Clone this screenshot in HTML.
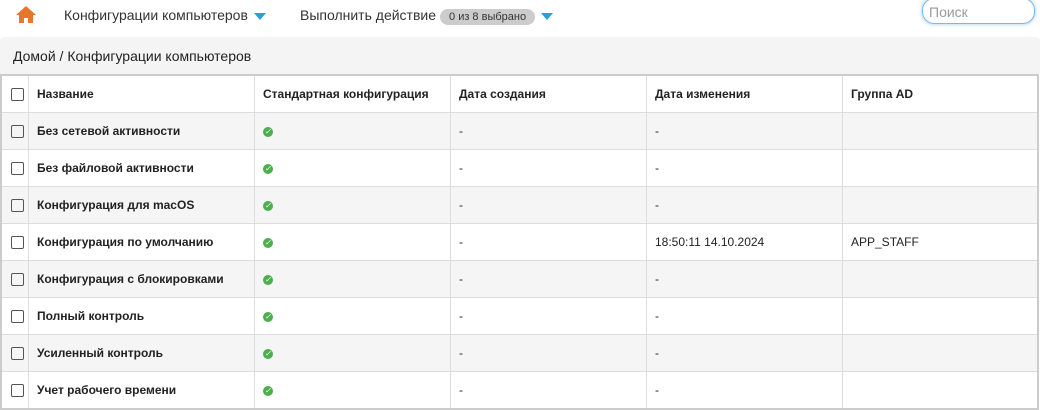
<!DOCTYPE html>
<html><head><meta charset="utf-8"><style>
body{margin:0;width:1040px;height:408px;overflow:hidden;background:#fff;font-family:"Liberation Sans",sans-serif;color:#222}
.top{height:37px;position:relative}
.top span{position:absolute;top:7px;font-size:14px;color:#333}
.tri{display:inline-block;width:0;height:0;border-left:6px solid transparent;border-right:6px solid transparent;border-top:7px solid #2a9fd8;vertical-align:middle;margin-left:6px}
.badge{background:#ccc;border-radius:9px;font-size:11px;padding:2px 9px;margin-left:4px;color:#333}
.search{position:absolute;left:922px;top:-2px;width:113px;height:26px;border:1px solid #7ab8e8;border-radius:12px;box-shadow:0 0 4px #9cc8f0;font-size:14px;color:#999;line-height:26px;padding-left:6px;box-sizing:border-box}
.bc{height:37px;background:#f4f4f4;border-radius:4px 4px 0 0;font-size:14px;line-height:39px;padding-left:13px;color:#222}
table{position:absolute;left:0;top:74px;width:1039px;border-collapse:collapse;border:2px solid #ccc;font-size:12px}
td,th{border:1px solid #ddd;height:36px;padding:0 0 0 8px;text-align:left}
th{font-weight:bold;background:#fff}
td.n{font-weight:bold}
tr:nth-child(even) td{background:#f5f5f5}
.cb{width:11px;height:11px;border:1px solid #555;border-radius:2px;display:block;margin-left:1px}
.ok{display:inline-block;width:10px;height:10px;border-radius:50%;background:#4cae4c;color:#fff;font-size:8px;line-height:10px;text-align:center;vertical-align:middle}
</style></head><body>
<div class="top">
<svg style="position:absolute;left:15px;top:5px" width="22" height="19" viewBox="0 0 22 19"><path d="M11 1L1 10h3v8h5v-5h4v5h5v-8h3z" fill="#e8772e"/></svg>
<span style="left:64px">Конфигурации компьютеров<i class="tri"></i></span>
<span style="left:300px">Выполнить действие<b class="badge" style="font-weight:normal">0 из 8 выбрано</b><i class="tri"></i></span>
<div class="search">Поиск</div>
</div>
<div class="bc">Домой / Конфигурации компьютеров</div>
<table>
<tr><th style="width:18px"><i class="cb"></i></th><th style="width:217px">Название</th><th style="width:187px">Стандартная конфигурация</th><th style="width:187px">Дата создания</th><th style="width:187px">Дата изменения</th><th>Группа AD</th></tr>
<tr><td><i class="cb"></i></td><td class="n">Без сетевой активности</td><td><i class="ok">✓</i></td><td>-</td><td>-</td><td></td></tr>
<tr><td><i class="cb"></i></td><td class="n">Без файловой активности</td><td><i class="ok">✓</i></td><td>-</td><td>-</td><td></td></tr>
<tr><td><i class="cb"></i></td><td class="n">Конфигурация для macOS</td><td><i class="ok">✓</i></td><td>-</td><td>-</td><td></td></tr>
<tr><td><i class="cb"></i></td><td class="n">Конфигурация по умолчанию</td><td><i class="ok">✓</i></td><td>-</td><td>18:50:11 14.10.2024</td><td>APP_STAFF</td></tr>
<tr><td><i class="cb"></i></td><td class="n">Конфигурация с блокировками</td><td><i class="ok">✓</i></td><td>-</td><td>-</td><td></td></tr>
<tr><td><i class="cb"></i></td><td class="n">Полный контроль</td><td><i class="ok">✓</i></td><td>-</td><td>-</td><td></td></tr>
<tr><td><i class="cb"></i></td><td class="n">Усиленный контроль</td><td><i class="ok">✓</i></td><td>-</td><td>-</td><td></td></tr>
<tr><td><i class="cb"></i></td><td class="n">Учет рабочего времени</td><td><i class="ok">✓</i></td><td>-</td><td>-</td><td></td></tr>
</table>
</body></html>
